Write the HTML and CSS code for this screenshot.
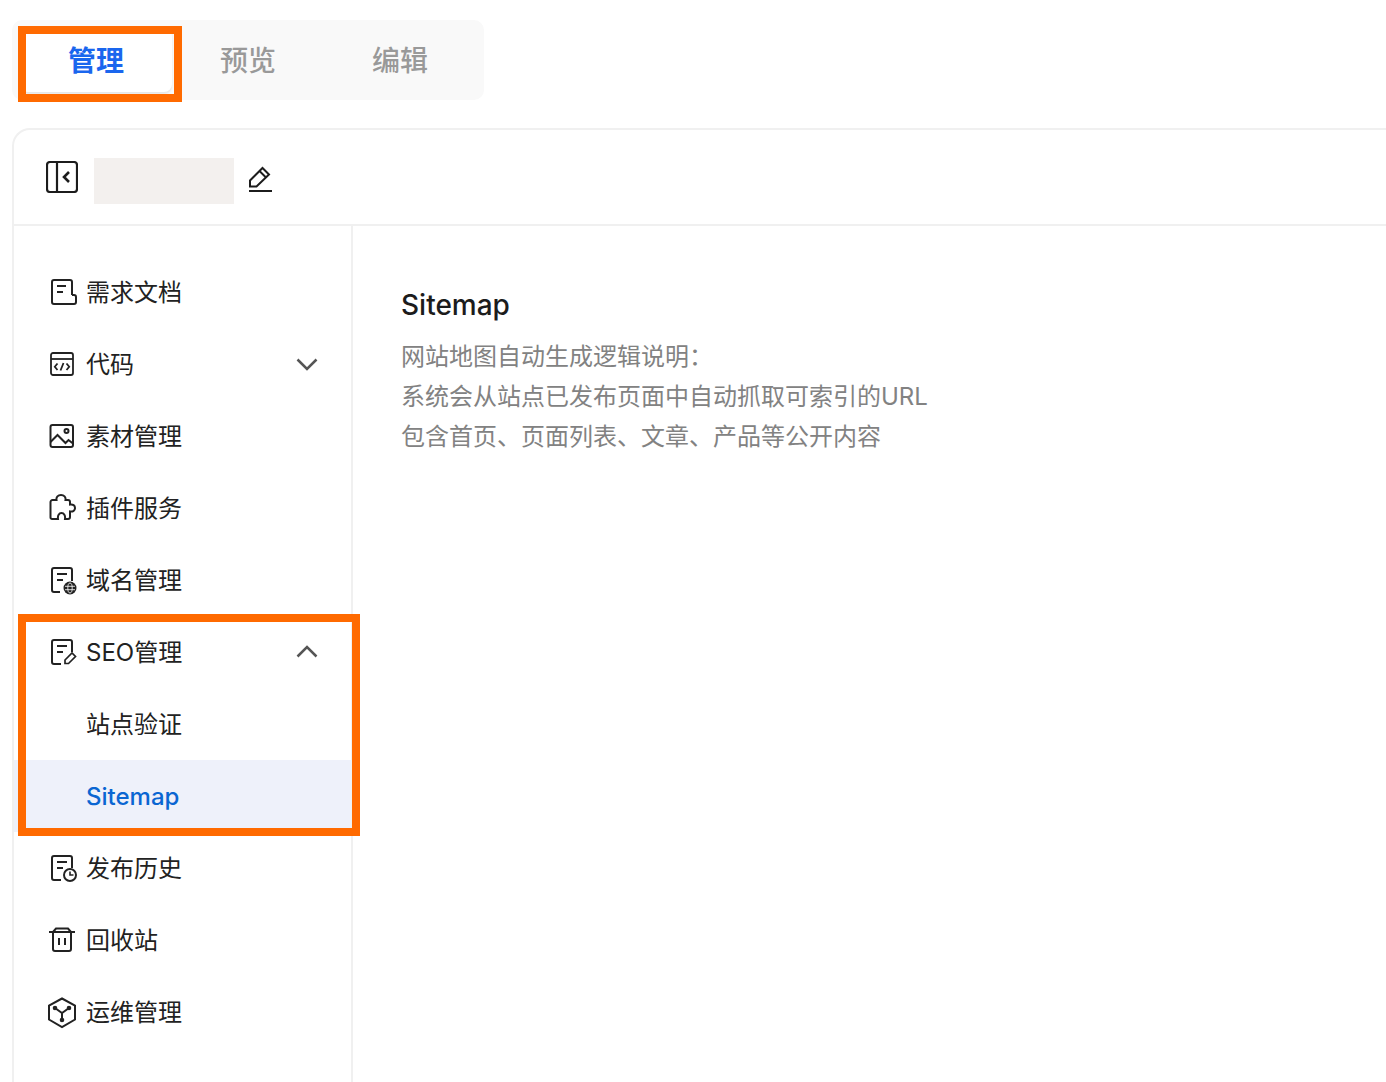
FILE: index.html
```html
<!DOCTYPE html>
<html lang="zh-CN">
<head>
<meta charset="utf-8">
<title>Sitemap</title>
<link rel="stylesheet" href="styles.css">
</head>
<body>
<div class="page">
  <div class="tabs">
    <div class="tab tab-active">管理</div>
    <div class="tab">预览</div>
    <div class="tab">编辑</div>
  </div>
  <div class="card">
    <header class="card-head">
      <svg class="collapse-icon" width="32" height="32" viewBox="0 0 32 32" fill="none" stroke="#1c1c1c" stroke-width="2.200"><rect x="1" y="1" width="30" height="30" rx="3"/><path d="M11 1v30"/><path d="M23 11l-5 5 5 5" stroke-width="2.600"/></svg>
      <div class="name-block"></div>
      <svg class="edit-icon" width="24" height="26" viewBox="0 0 24 26" fill="none" stroke="#1c1c1c" stroke-width="2"><path d="M1 25h23" /><path d="M2 20.500v-6L14.500 2l6.500 6.500L8.500 20.500z"/><path d="M11.500 5l6.500 6.500"/></svg>
    </header>
    <div class="card-body">
      <nav class="sidebar">
        <div class="item">
          <svg class="ico" width="28" height="28" viewBox="0 0 28 28" fill="none" stroke="#222" stroke-width="2"><path d="M24 17V4a2 2 0 0 0-2-2H6a2 2 0 0 0-2 2v20a2 2 0 0 0 2 2h20a2 2 0 0 0 2-2v-5a2 2 0 0 0-2-2h-2"/><path d="M9 8h9M9 14h6"/></svg>
          <span class="label">需求文档</span>
        </div>
        <div class="item">
          <svg class="ico" width="28" height="28" viewBox="0 0 28 28" fill="none" stroke="#222" stroke-width="1.800"><rect x="3" y="3" width="22" height="22" rx="2"/><path d="M3 9h22"/><path d="M9.500 13.500L6.800 16.800l2.700 3.200M18.500 13.500l2.700 3.300-2.700 3.200M15.500 13l-3 7.500" stroke-width="1.800"/></svg>
          <span class="label">代码</span>
          <svg class="chev" width="22" height="16" viewBox="0 0 22 16" fill="none" stroke="#555" stroke-width="2.500"><path d="M1.500 3.500L11 13l9.500-9.500"/></svg>
        </div>
        <div class="item">
          <svg class="ico" width="28" height="28" viewBox="0 0 28 28" fill="none" stroke="#222" stroke-width="2"><rect x="2.500" y="3" width="22.500" height="22" rx="2"/><path d="M2.500 20l7-7 8 8 3-3 4.500 3.500"/><circle cx="18.500" cy="9" r="2"/></svg>
          <span class="label">素材管理</span>
        </div>
        <div class="item">
          <svg class="ico" width="28" height="28" viewBox="0 0 28 28" fill="none" stroke="#222" stroke-width="2"><path d="M4 25a1.500 1.500 0 0 1-1.500-1.500V8A2 2 0 0 1 4.500 6H8.500C8 3 10 1 13 1s5 2 4.500 5H20a2 2 0 0 1 2 2v2.500c3-.5 5 1 5 3.500s-2 4-5 3.500V23a2 2 0 0 1-2 2h-3c.5-3.500-1-6-3.500-6s-4 2.500-3.500 6z"/></svg>
          <span class="label">插件服务</span>
        </div>
        <div class="item">
          <svg class="ico" width="28" height="28" viewBox="0 0 28 28" fill="none" stroke="#222" stroke-width="2"><path d="M12 26H6a2 2 0 0 1-2-2V4a2 2 0 0 1 2-2h16a2 2 0 0 1 2 2v11"/><path d="M9 8h10M9 14h6"/><circle cx="22" cy="22" r="6.500" fill="#222" stroke="none"/><g stroke="#fff" stroke-width=".8"><ellipse cx="22" cy="22" rx="2.200" ry="5"/><path d="M17 20.300h10M17 23.700h10"/></g></svg>
          <span class="label">域名管理</span>
        </div>
        <div class="item">
          <svg class="ico" width="28" height="28" viewBox="0 0 28 28" fill="none" stroke="#222" stroke-width="2"><path d="M13 26H6a2 2 0 0 1-2-2V4a2 2 0 0 1 2-2h16a2 2 0 0 1 2 2v10"/><path d="M9 8h10M9 14h6"/><path d="M17 22l7-7 3.500 3.500-7 7H17z" stroke-width="1.700"/></svg>
          <span class="label">SEO管理</span>
          <svg class="chev" width="22" height="16" viewBox="0 0 22 16" fill="none" stroke="#555" stroke-width="2.500"><path d="M1.500 12.500L11 3l9.500 9.500"/></svg>
        </div>
        <div class="item sub">
          <span class="label">站点验证</span>
        </div>
        <div class="item sub item-active">
          <span class="label">Sitemap</span>
        </div>
        <div class="item">
          <svg class="ico" width="28" height="28" viewBox="0 0 28 28" fill="none" stroke="#222" stroke-width="2"><path d="M13 26H6a2 2 0 0 1-2-2V4a2 2 0 0 1 2-2h16a2 2 0 0 1 2 2v10"/><path d="M9 8h10M9 14h6"/><circle cx="22" cy="21" r="6"/><path d="M22 17.500V21h3.500" stroke-width="1.600"/></svg>
          <span class="label">发布历史</span>
        </div>
        <div class="item">
          <svg class="ico" width="28" height="28" viewBox="0 0 28 28" fill="none" stroke="#222" stroke-width="2"><path d="M1 6h26"/><path d="M5 6l3-3.500h12L23 6"/><path d="M5 6v17a2 2 0 0 0 2 2h14a2 2 0 0 0 2-2V6"/><path d="M11 12v7M17 12v7"/></svg>
          <span class="label">回收站</span>
        </div>
        <div class="item">
          <svg class="ico" width="28" height="28" viewBox="0 0 28 28" fill="none" stroke="#222" stroke-width="2"><path d="M14 .5L27 7.500v14L14 29 1 21.500v-14z"/><path d="M7 10l7 5 7-5M14 15v7"/><circle cx="7" cy="10" r="1.300" fill="#222"/><circle cx="21" cy="10" r="1.300" fill="#222"/><circle cx="14" cy="22" r="1.300" fill="#222"/></svg>
          <span class="label">运维管理</span>
        </div>
      </nav>
      <main class="content">
        <h1 class="title">Sitemap</h1>
        <p class="desc">网站地图自动生成逻辑说明：<br>系统会从站点已发布页面中自动抓取可索引的URL<br>包含首页、页面列表、文章、产品等公开内容</p>
      </main>
    </div>
  </div>
  <div class="mark mark-tab"></div>
  <div class="mark mark-menu"></div>
</div>
</body>
</html>
```

FILE: styles.css
```css
* { box-sizing: border-box; }
html, body { margin: 0; padding: 0; height: 100%; background: #fff; overflow: hidden; }
body { font-family: Inter, "Noto Sans CJK SC", sans-serif; color: #222; }
.page { position: relative; height: 1082px; display: flex; flex-direction: column; padding: 20px 0 0 12px; }
.tabs { display: flex; align-self: flex-start; padding: 8px; width: 472px; height: 80px; background: #f9f9f9; border-radius: 10px; }
.tab { width: 152px; height: 64px; padding-bottom: 2px; display: flex; align-items: center; justify-content: center; font-size: 28px; font-weight: 500; color: #999; }
.tab-active { color: #1a66ee; font-weight: 600; background: #fff; border-radius: 8px; box-shadow: 0 2px 2px rgba(0,0,0,.08); }
.card { flex: 1; min-height: 0; margin-top: 28px; display: flex; flex-direction: column; border: 2px solid #f0f0f0; border-right: 0; border-bottom: 0; border-top-left-radius: 18px; background: #fff; }
.card-head { flex: none; height: 96px; display: flex; align-items: flex-start; padding: 28px 0 0 32px; border-bottom: 2px solid #f0f0f0; }
.collapse-icon { margin-top: 3px; }
.name-block { width: 140px; height: 46px; margin-left: 16px; background: #f3f0ee; }
.edit-icon { margin: 8px 0 0 14px; }
.card-body { flex: 1; min-height: 0; display: flex; }
.sidebar { width: 339px; flex: none; padding-top: 30px; border-right: 2px solid #f0f0f0; }
.item { height: 72px; display: flex; align-items: center; gap: 10px; padding: 0 33px 0 34px; font-size: 24px; line-height: 32px; color: #222; }
.label { padding-top: 2px; }
.ico { flex: none; overflow: visible; }
.chev { margin-left: auto; }
.sub { padding-left: 72px; }
.item-active { background: #eef1fa; color: #0a66d2; font-weight: 500; }
.content { flex: 1; padding: 61px 0 0 48px; }
.title { margin: 0; font-size: 28px; line-height: 36px; font-weight: 500; color: #1c1c1c; }
.desc { margin: 14px 0 0; font-size: 24px; line-height: 40px; color: #828282; white-space: nowrap; }
.mark { position: absolute; border: 8px solid #ff6a00; pointer-events: none; }
.mark-tab { left: 18px; top: 26px; width: 164px; height: 76px; }
.mark-menu { left: 18px; top: 614px; width: 342px; height: 222px; }
```
